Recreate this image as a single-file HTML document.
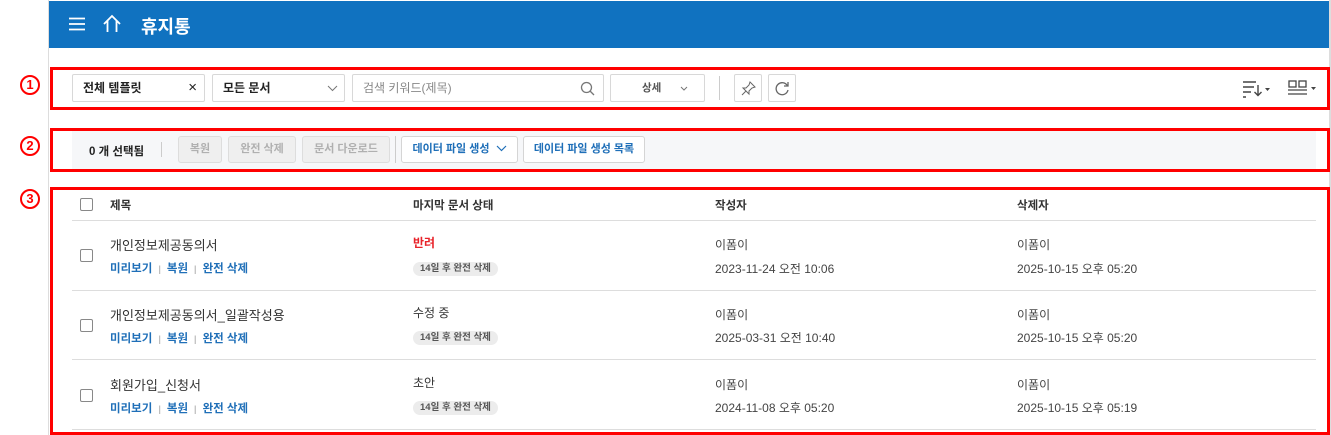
<!DOCTYPE html>
<html><head><meta charset="utf-8"><style>
*{box-sizing:border-box;margin:0;padding:0}
body{width:1331px;height:435px;background:#fff;font-family:"Liberation Sans","Noto Sans CJK KR",sans-serif;position:relative;overflow:hidden;color:#333}
.a{position:absolute}
.hdr{left:49px;top:1px;width:1280px;height:47px;background:#1072c0}
.vl{left:48px;top:0;width:1px;height:435px;background:#ddd}
.vr{left:1329px;top:0;width:2px;height:435px;background:#ddd}
.red{border:3px solid #f00}
.num{width:20px;height:20px;border:2px solid #f00;border-radius:50%;color:#f00;font-size:13px;font-weight:bold;text-align:center;line-height:16px}
.box{border:1px solid #d8d8d8;border-radius:2px;height:28px;top:74px;font-size:12px;line-height:26px;padding-left:10px;color:#222}
.btn{border:1px solid #d5d5d5;border-radius:3px;height:27px;top:136px;font-size:11px;line-height:25px;text-align:center;font-weight:bold}
.dis{background:#efefef;color:#b0b0b0;border-color:#ddd}
.blue{background:#fff;color:#1f6fb8}
.cb{width:13px;height:13px;border:1.5px solid #888;border-radius:2px;background:#fff}
.hl{height:1px;background:#ddd;left:72px;width:1244px}
.t{font-size:13px;color:#333}
.s{font-size:12px;color:#444}
.lk{font-size:11.5px;color:#1f6fb8;font-weight:bold}
.sep{color:#bbb;font-size:9px;margin:0 6px}
.bd{background:#ececec;border-radius:8px;height:14px;font-size:9.5px;line-height:14px;padding:0 7px;color:#555;font-weight:bold}
.th{font-size:11.5px;font-weight:bold;color:#333;top:197px}
</style></head><body>
<div class="a vl"></div><div class="a vr"></div>
<div class="a hdr"></div>
<svg class="a" style="left:68px;top:17px" width="18" height="14"><path d="M1 1.5H17M1 7H17M1 12.5H17" stroke="#fff" stroke-width="1.8"/></svg>
<svg class="a" style="left:102px;top:14px" width="20" height="19"><path d="M2 10L10 2L18 10M5.5 7V18M14.5 7V18" stroke="#fff" stroke-width="1.8" fill="none"/></svg>
<div class="a" style="left:141px;top:13px;color:#fff;font-size:18px;font-weight:bold">휴지통</div>

<div class="a num" style="left:20px;top:75px">1</div>
<div class="a num" style="left:20px;top:136px">2</div>
<div class="a num" style="left:20px;top:189px">3</div>

<div class="a red" style="left:50px;top:67px;width:1280px;height:43px"></div>
<div class="a box" style="left:72px;width:133px;font-weight:bold">전체 템플릿<span style="position:absolute;right:7px;font-weight:normal;font-size:15px">×</span></div>
<div class="a box" style="left:212px;width:133px;font-weight:bold">모든 문서<svg style="position:absolute;right:6px;top:10px" width="11" height="7"><path d="M1 1L5.5 5.5L10 1" stroke="#777" fill="none"/></svg></div>
<div class="a box" style="left:352px;width:252px;color:#888">검색 키워드(제목)<svg style="position:absolute;right:8px;top:6px" width="15" height="15"><circle cx="6.5" cy="6.5" r="5" stroke="#777" stroke-width="1.3" fill="none"/><path d="M10 10L14 14" stroke="#777" stroke-width="1.3"/></svg></div>
<div class="a box" style="left:610px;width:95px;padding-left:31px;font-size:10.5px;color:#555;font-weight:bold">상세<svg style="position:absolute;right:16px;top:11px" width="8" height="5"><path d="M1 1L4 4L7 1" stroke="#777" fill="none"/></svg></div>
<div class="a" style="left:719px;top:76px;width:1px;height:24px;background:#ccc"></div>
<div class="a box" style="left:734px;width:28px;padding:0"><svg style="position:absolute;left:6px;top:6px" width="15" height="15"><path d="M9 1L14 6L11 7L8 10L8 13L2 7L5 7L8 4Z M5 10L1 14" stroke="#666" fill="none"/></svg></div>
<div class="a box" style="left:768px;width:28px;padding:0"><svg style="position:absolute;left:6px;top:6px" width="15" height="15"><path d="M12.5 5A6 6 0 1 0 13 9" stroke="#666" stroke-width="1.3" fill="none"/><path d="M13 1V5H9" stroke="#666" stroke-width="1.3" fill="none"/></svg></div>
<svg class="a" style="left:1242px;top:80px" width="30" height="18"><path d="M1 2H14M1 7H12M1 12H9M1 17H4" stroke="#444" stroke-width="1.4"/><path d="M16 5V15M12.5 12L16 15.5L19.5 12" stroke="#444" stroke-width="1.4" fill="none"/><path d="M23 8H28L25.5 11Z" fill="#444"/></svg>
<svg class="a" style="left:1288px;top:80px" width="30" height="16"><rect x="1" y="1" width="7" height="6" stroke="#444" stroke-width="1.3" fill="none"/><rect x="11" y="1" width="7" height="6" stroke="#444" stroke-width="1.3" fill="none"/><path d="M0 10H19M0 14H19" stroke="#444" stroke-width="1.3"/><path d="M23 7H28L25.5 10Z" fill="#444"/></svg>

<div class="a red" style="left:50px;top:128px;width:1280px;height:44px"></div>
<div class="a" style="left:72px;top:131px;width:1244px;height:38px;background:#f6f7f9"></div>
<div class="a" style="left:89px;top:143px;font-size:11.5px;font-weight:bold;color:#222">0 개 선택됨</div>
<div class="a" style="left:161px;top:142px;width:1px;height:15px;background:#ccc"></div>
<div class="a btn dis" style="left:178px;width:44px">복원</div>
<div class="a btn dis" style="left:228px;width:68px">완전 삭제</div>
<div class="a btn dis" style="left:302px;width:88px">문서 다운로드</div>
<div class="a" style="left:395px;top:136px;width:1px;height:27px;background:#ccc"></div>
<div class="a btn blue" style="left:401px;width:117px">데이터 파일 생성 <svg width="11" height="7" style="margin-left:3px"><path d="M1 1L5.5 5.5L10 1" stroke="#1f6fb8" fill="none" stroke-width="1.2"/></svg></div>
<div class="a btn blue" style="left:523px;width:122px">데이터 파일 생성 목록</div>

<div class="a red" style="left:50px;top:187px;width:1280px;height:248px"></div>
<div class="a cb" style="left:80px;top:198px"></div>
<div class="a th" style="left:110px">제목</div>
<div class="a th" style="left:413px">마지막 문서 상태</div>
<div class="a th" style="left:715px">작성자</div>
<div class="a th" style="left:1017px">삭제자</div>
<div class="a hl" style="top:220px"></div>

<div class="a cb" style="left:80px;top:249px"></div>
<div class="a t" style="left:110px;top:235px">개인정보제공동의서</div>
<div class="a lk" style="left:110px;top:260px">미리보기<span class="sep">|</span>복원<span class="sep">|</span>완전 삭제</div>
<div class="a" style="left:413px;top:234px;font-size:12px;font-weight:bold;color:#e8232a">반려</div>
<div class="a bd" style="left:413px;top:262px">14일 후 완전 삭제</div>
<div class="a s" style="left:715px;top:236px">이폼이</div>
<div class="a s" style="left:715px;top:260px">2023-11-24 오전 10:06</div>
<div class="a s" style="left:1017px;top:236px">이폼이</div>
<div class="a s" style="left:1017px;top:260px">2025-10-15 오후 05:20</div>
<div class="a hl" style="top:290px"></div>

<div class="a cb" style="left:80px;top:319px"></div>
<div class="a t" style="left:110px;top:305px">개인정보제공동의서_일괄작성용</div>
<div class="a lk" style="left:110px;top:330px">미리보기<span class="sep">|</span>복원<span class="sep">|</span>완전 삭제</div>
<div class="a" style="left:413px;top:304px;font-size:12px;color:#333">수정 중</div>
<div class="a bd" style="left:413px;top:331px">14일 후 완전 삭제</div>
<div class="a s" style="left:715px;top:306px">이폼이</div>
<div class="a s" style="left:715px;top:329px">2025-03-31 오전 10:40</div>
<div class="a s" style="left:1017px;top:306px">이폼이</div>
<div class="a s" style="left:1017px;top:329px">2025-10-15 오후 05:20</div>
<div class="a hl" style="top:359px"></div>

<div class="a cb" style="left:80px;top:389px"></div>
<div class="a t" style="left:110px;top:375px">회원가입_신청서</div>
<div class="a lk" style="left:110px;top:400px">미리보기<span class="sep">|</span>복원<span class="sep">|</span>완전 삭제</div>
<div class="a" style="left:413px;top:374px;font-size:12px;color:#333">초안</div>
<div class="a bd" style="left:413px;top:401px">14일 후 완전 삭제</div>
<div class="a s" style="left:715px;top:376px">이폼이</div>
<div class="a s" style="left:715px;top:399px">2024-11-08 오후 05:20</div>
<div class="a s" style="left:1017px;top:376px">이폼이</div>
<div class="a s" style="left:1017px;top:399px">2025-10-15 오후 05:19</div>
<div class="a hl" style="top:429px"></div>
</body></html>
